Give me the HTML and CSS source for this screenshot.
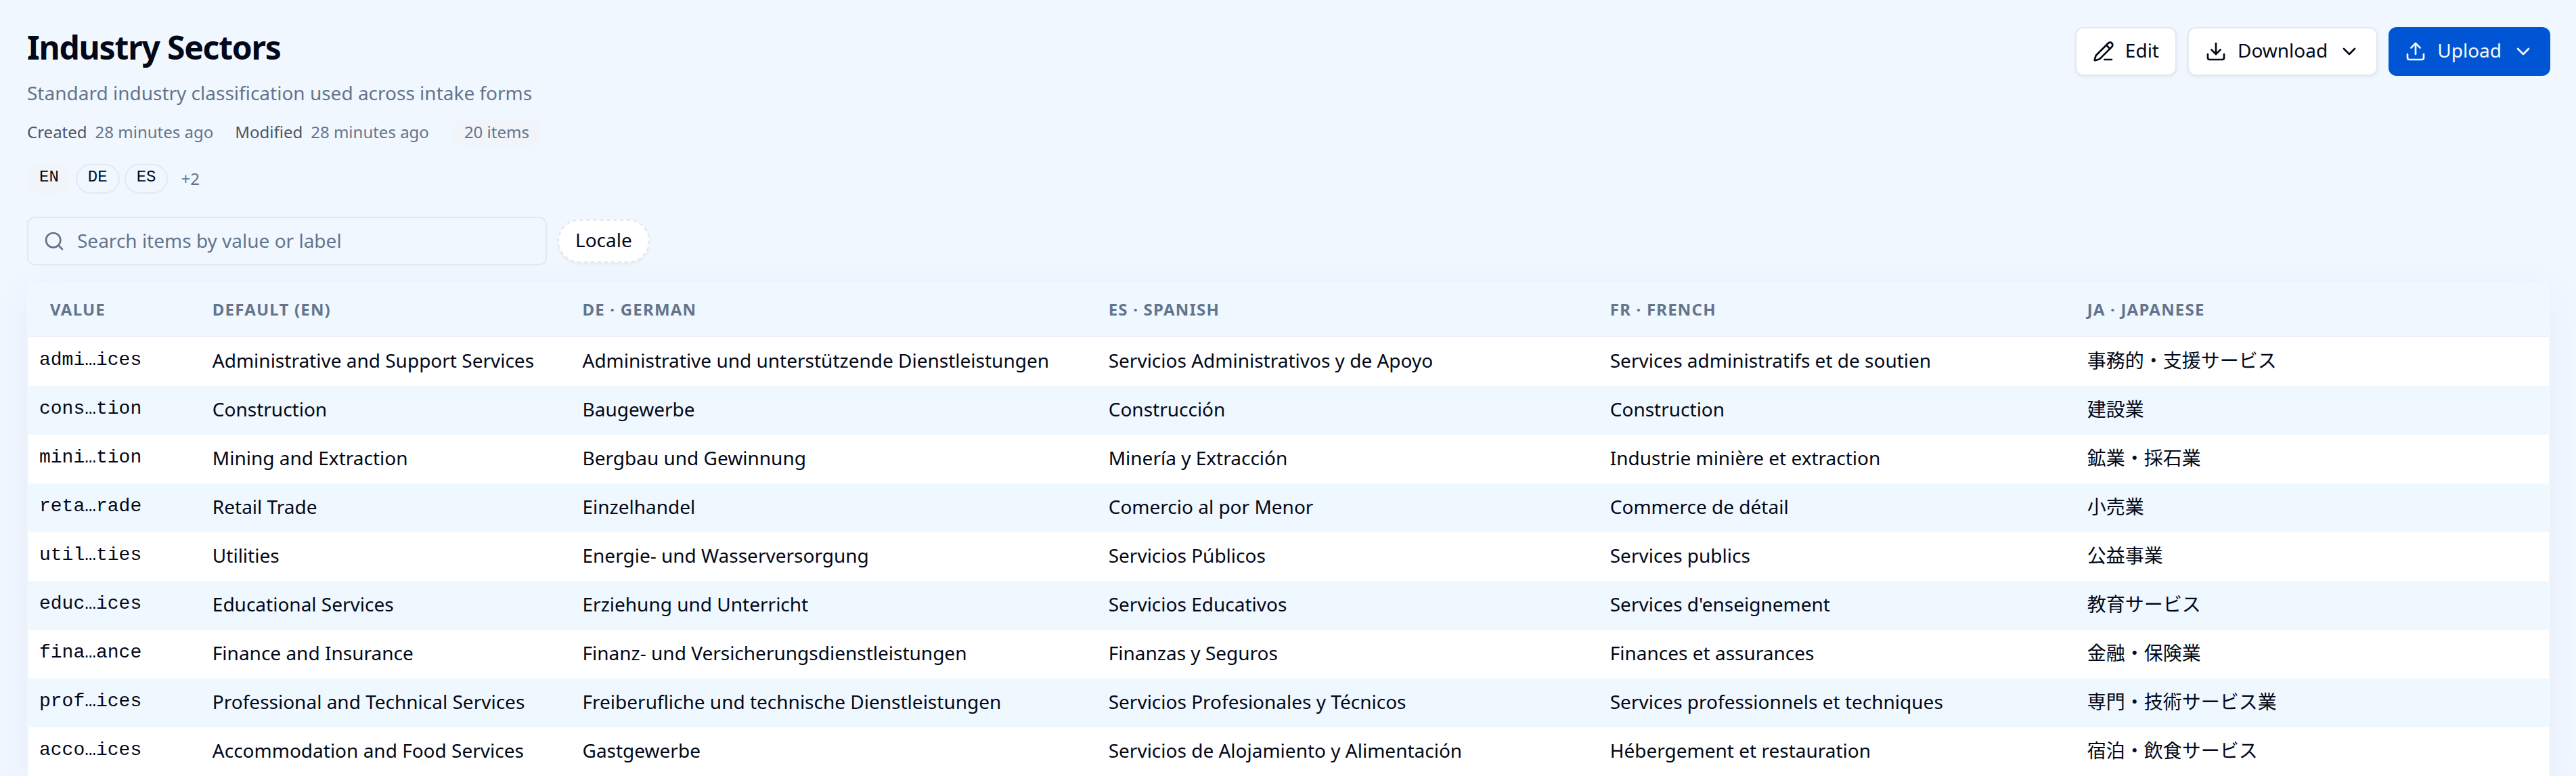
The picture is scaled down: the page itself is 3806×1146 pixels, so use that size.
FILE: index.html
```html
<!DOCTYPE html>
<html lang="en">
<head>
  <meta charset="UTF-8">
  <meta name="viewport" content="width=device-width, initial-scale=1">
  <title>Industry Sectors</title>
  <link rel="stylesheet" href="styles.css">
</head>
<body>
  <main class="page">
    <header class="page-header">
      <div class="heading">
        <h1>Industry Sectors</h1>
        <p class="description">Standard industry classification used across intake forms</p>
        <div class="meta">
          <span class="meta-item"><span class="meta-label">Created</span> <time>28 minutes ago</time></span>
          <span class="meta-item"><span class="meta-label">Modified</span> <time>28 minutes ago</time></span>
          <span class="count">20 items</span>
        </div>
        <div class="locales">
          <span class="locale default">EN</span>
          <span class="locale">DE</span>
          <span class="locale">ES</span>
          <span class="more">+2</span>
        </div>
      </div>
      <div class="actions">
        <button type="button" class="btn">
          <svg class="icon" viewBox="0 0 24 24"><path d="M13 21h8"/><path d="m15 5 4 4"/><path d="M21.174 6.812a1 1 0 0 0-3.986-3.987L3.842 16.174a2 2 0 0 0-.5.83l-1.321 4.352a.5.5 0 0 0 .623.622l4.353-1.32a2 2 0 0 0 .83-.497z"/></svg>
          <span class="btn-label">Edit</span>
        </button>
        <button type="button" class="btn">
          <svg class="icon" viewBox="0 0 24 24"><path d="M12 15V3"/><path d="M21 15v4a2 2 0 0 1-2 2H5a2 2 0 0 1-2-2v-4"/><path d="m7 10 5 5 5-5"/></svg>
          <span class="btn-label">Download</span>
          <svg class="icon" viewBox="0 0 24 24"><path d="m6 9 6 6 6-6"/></svg>
        </button>
        <button type="button" class="btn primary">
          <svg class="icon" viewBox="0 0 24 24"><path d="M12 3v12"/><path d="m17 8-5-5-5 5"/><path d="M21 15v4a2 2 0 0 1-2 2H5a2 2 0 0 1-2-2v-4"/></svg>
          <span class="btn-label">Upload</span>
          <svg class="icon" viewBox="0 0 24 24"><path d="m6 9 6 6 6-6"/></svg>
        </button>
      </div>
    </header>

    <div class="toolbar">
      <label class="search">
        <svg class="icon" viewBox="0 0 24 24"><circle cx="11" cy="11" r="8"/><path d="m21 21-4.3-4.3"/></svg>
        <input type="search" placeholder="Search items by value or label" aria-label="Search items">
      </label>
      <button type="button" class="filter">Locale</button>
    </div>

    <div class="table-card">
      <table>
        <colgroup>
          <col class="col-value">
          <col class="col-en">
          <col class="col-de">
          <col class="col-es">
          <col class="col-fr">
          <col>
        </colgroup>
        <thead>
          <tr>
            <th scope="col"><button type="button" class="sort">Value</button></th>
            <th scope="col">Default (EN)</th>
            <th scope="col">DE · German</th>
            <th scope="col">ES · Spanish</th>
            <th scope="col">FR · French</th>
            <th scope="col">JA · Japanese</th>
          </tr>
        </thead>
        <tbody>
          <tr>
            <td><code>admi…ices</code></td>
            <td>Administrative and Support Services</td>
            <td>Administrative und unterstützende Dienstleistungen</td>
            <td>Servicios Administrativos y de Apoyo</td>
            <td>Services administratifs et de soutien</td>
            <td lang="ja">事務的・支援サービス</td>
          </tr>
          <tr>
            <td><code>cons…tion</code></td>
            <td>Construction</td>
            <td>Baugewerbe</td>
            <td>Construcción</td>
            <td>Construction</td>
            <td lang="ja">建設業</td>
          </tr>
          <tr>
            <td><code>mini…tion</code></td>
            <td>Mining and Extraction</td>
            <td>Bergbau und Gewinnung</td>
            <td>Minería y Extracción</td>
            <td>Industrie minière et extraction</td>
            <td lang="ja">鉱業・採石業</td>
          </tr>
          <tr>
            <td><code>reta…rade</code></td>
            <td>Retail Trade</td>
            <td>Einzelhandel</td>
            <td>Comercio al por Menor</td>
            <td>Commerce de détail</td>
            <td lang="ja">小売業</td>
          </tr>
          <tr>
            <td><code>util…ties</code></td>
            <td>Utilities</td>
            <td>Energie- und Wasserversorgung</td>
            <td>Servicios Públicos</td>
            <td>Services publics</td>
            <td lang="ja">公益事業</td>
          </tr>
          <tr>
            <td><code>educ…ices</code></td>
            <td>Educational Services</td>
            <td>Erziehung und Unterricht</td>
            <td>Servicios Educativos</td>
            <td>Services d'enseignement</td>
            <td lang="ja">教育サービス</td>
          </tr>
          <tr>
            <td><code>fina…ance</code></td>
            <td>Finance and Insurance</td>
            <td>Finanz- und Versicherungsdienstleistungen</td>
            <td>Finanzas y Seguros</td>
            <td>Finances et assurances</td>
            <td lang="ja">金融・保険業</td>
          </tr>
          <tr>
            <td><code>prof…ices</code></td>
            <td>Professional and Technical Services</td>
            <td>Freiberufliche und technische Dienstleistungen</td>
            <td>Servicios Profesionales y Técnicos</td>
            <td>Services professionnels et techniques</td>
            <td lang="ja">専門・技術サービス業</td>
          </tr>
          <tr>
            <td><code>acco…ices</code></td>
            <td>Accommodation and Food Services</td>
            <td>Gastgewerbe</td>
            <td>Servicios de Alojamiento y Alimentación</td>
            <td>Hébergement et restauration</td>
            <td lang="ja">宿泊・飲食サービス</td>
          </tr>
        </tbody>
      </table>
    </div>
  </main>
</body>
</html>
```
FILE: styles.css
```css
* {
  box-sizing: border-box;
  margin: 0;
  padding: 0;
}
body {
  font-family: 'Noto Sans', 'Noto Sans CJK JP', sans-serif;
  font-size: 28px;
  line-height: 40px;
  color: #020817;
  background-color: #f0f7ff;
}
button, input {
  font: inherit;
  color: inherit;
}
.page {
  padding: 40px 38px 0 40px;
}
.icon {
  width: 32px;
  height: 32px;
  flex-shrink: 0;
  fill: none;
  stroke: currentColor;
  stroke-width: 2;
  stroke-linecap: round;
  stroke-linejoin: round;
}

/* header */
.page-header {
  display: flex;
  justify-content: space-between;
  align-items: flex-start;
  margin-bottom: 32px;
}
h1 {
  font-size: 48px;
  line-height: 60px;
  font-weight: 700;
  letter-spacing: -0.025em;
}
.description {
  margin-top: 16px;
  line-height: 42px;
  color: #64748b;
}
.meta {
  display: flex;
  align-items: center;
  gap: 32px;
  margin-top: 18px;
  font-size: 24px;
  line-height: 38px;
  color: #64748b;
}
.meta-item {
  display: flex;
  gap: 12px;
  padding-bottom: 2px;
}
.meta-label {
  color: #4b5563;
}
.count {
  margin-left: 2px;
  padding: 0 18px 2px;
  border-radius: 20px;
  background-color: #f1f5f9;
}
.locales {
  display: flex;
  align-items: center;
  gap: 7px;
  height: 48px;
  margin-top: 24px;
}
.locale {
  padding: 4px 16px 8px;
  border: 2px solid #e4e8f0;
  border-radius: 22px;
  font-family: 'Liberation Mono', monospace;
  font-size: 24px;
  line-height: 28px;
}
.locale.default {
  border-color: transparent;
  background-color: #f1f5f9;
}
.more {
  margin-left: 12px;
  font-size: 24px;
  color: #64748b;
}
.actions {
  display: flex;
  gap: 16px;
}
.btn {
  display: flex;
  align-items: center;
  gap: 16px;
  height: 72px;
  padding: 0 24px;
  border: 2px solid #e4e8f0;
  border-radius: 12px;
  background-color: #fff;
  box-shadow: 0 2px 4px rgba(0, 0, 0, 0.05);
  cursor: pointer;
}
.btn-label {
  padding-bottom: 4px;
}
.btn.primary {
  border: none;
  background-color: #0055d4;
  color: #f8fafc;
  box-shadow: none;
}

/* search and filters */
.toolbar {
  display: flex;
  align-items: center;
  gap: 16px;
  margin-bottom: 24px;
}
.search {
  display: flex;
  align-items: center;
  gap: 18px;
  width: 768px;
  height: 72px;
  padding: 0 22px;
  border: 2px solid #e4e8f0;
  border-radius: 12px;
  color: #64748b;
}
.search input {
  flex: 1;
  padding-bottom: 2px;
  border: none;
  outline: none;
  background: none;
}
.search input::placeholder {
  color: #64748b;
  opacity: 1;
}
.filter {
  height: 64px;
  padding: 0 24px 4px;
  border: 2px dashed #e4e8f0;
  border-radius: 32px;
  background-color: #fff;
  box-shadow: 0 2px 4px rgba(0, 0, 0, 0.05);
  cursor: pointer;
}

/* items table */
.table-card {
  border: 2px solid #eff7ff;
  border-bottom: none;
  border-radius: 16px 16px 0 0;
  box-shadow: 0 16px 60px rgba(60, 60, 130, 0.06);
}
table {
  width: 100%;
  table-layout: fixed;
  border-collapse: separate;
  border-spacing: 0;
}
.col-value {
  width: 6.87%;
}
.col-en {
  width: 14.68%;
}
.col-de {
  width: 20.87%;
}
.col-es {
  width: 19.9%;
}
.col-fr {
  width: 18.93%;
}
th {
  height: 80px;
  padding: 0 16px;
  border-bottom: 2px solid #ebf2fc;
  background-color: #eff7ff;
  font-size: 24px;
  font-weight: 700;
  letter-spacing: 0.05em;
  text-align: left;
  text-transform: uppercase;
  color: #64748b;
}
.sort {
  padding: 0 16px;
  border: none;
  background: none;
  letter-spacing: inherit;
  text-transform: inherit;
  cursor: pointer;
}
td {
  height: 72px;
  padding: 0 16px 4px;
  white-space: nowrap;
  background-color: #fff;
}
tbody tr:nth-child(even) td {
  background-color: #eff7ff;
}
code {
  display: block;
  font-family: 'Liberation Mono', monospace;
  font-size: 28px;
}
```
